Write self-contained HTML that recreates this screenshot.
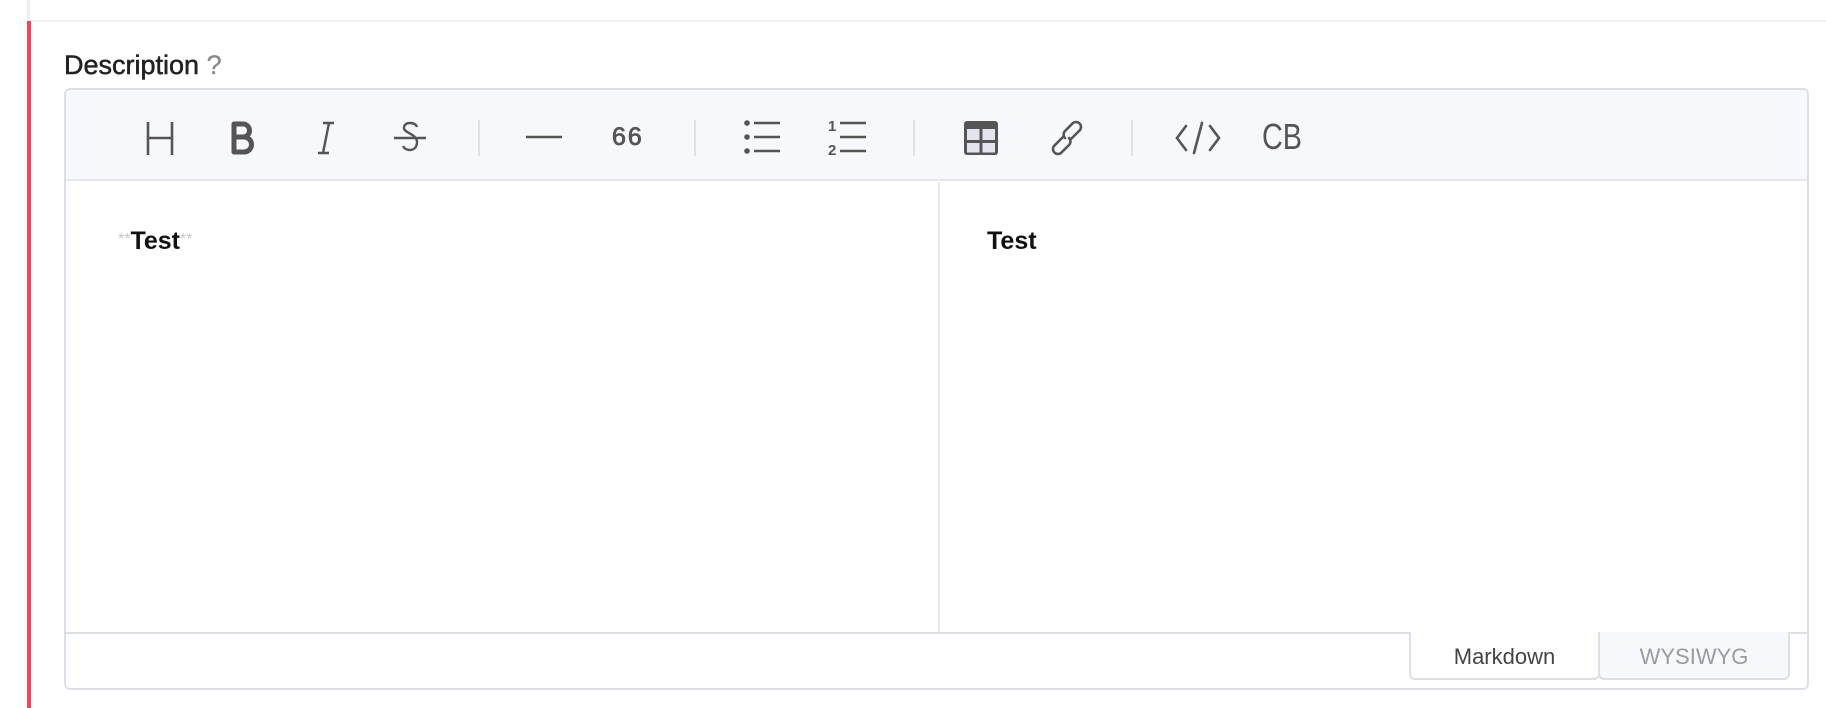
<!DOCTYPE html>
<html><head><meta charset="utf-8"><style>
*{margin:0;padding:0;box-sizing:border-box}
body{width:1826px;height:708px;background:#fff;position:relative;overflow:hidden;font-family:"Liberation Sans",Arial,sans-serif}
.a{position:absolute}
.ic{position:absolute;top:121px;width:32px;height:32px}
.sep{position:absolute;top:120px;width:2px;height:36px;background:#e0e1e5}
</style></head><body>
<div class="a" style="left:27px;top:0;width:3px;height:21px;background:#eeeeee"></div>
<div class="a" style="left:30px;top:20px;width:1796px;height:2px;background:#f2f2f4"></div>
<div class="a" style="left:27px;top:21px;width:4px;height:687px;background:#f0485a"></div>
<div class="a" style="left:64px;top:49px;font-size:27px;color:#222;line-height:32px;-webkit-text-stroke:0.5px #222">Description <span style="color:#8a8a8a;-webkit-text-stroke:0.3px #8a8a8a">?</span></div>

<div class="a" style="left:64px;top:88px;width:1745px;height:602px;border:2px solid #dcdfe6;border-radius:6px;background:#fff"></div>
<div class="a" style="left:66px;top:90px;width:1741px;height:91px;background:#f7f8fb;border-bottom:2px solid #e6e7eb;border-radius:5px 5px 0 0"></div>

<!-- H -->
<svg class="ic" style="left:144px;top:120px;height:36px" viewBox="0 0 32 36"><path d="M4 2v33M28 2v33M4 18h24" stroke="#555" stroke-width="2.6" fill="none"/></svg>
<!-- B -->
<svg class="ic" style="left:226px;top:120px;height:36px" viewBox="0 0 32 36"><path d="M8 4h9a6.5 6.5 0 0 1 0 13H8zM8 17h10a7 7 0 0 1 0 15H8z" stroke="#555" stroke-width="5" fill="none" stroke-linejoin="round"/></svg>
<!-- I -->
<svg class="ic" style="left:310px;top:120px;height:36px" viewBox="0 0 32 36"><path d="M13 3h11M8 33h11M19 3l-6 30" stroke="#555" stroke-width="2.4" fill="none"/></svg>
<!-- S -->
<svg class="ic" style="left:392px;top:120px;height:36px;width:36px" viewBox="0 0 36 36"><path d="M25 7c-1-3-4-4-7-4-4 0-6 2-6 5 0 5 13 6 13 14 0 5-3 8-7 8s-6-2-7-4M2 18h32" stroke="#555" stroke-width="2.4" fill="none"/></svg>
<div class="sep" style="left:478px"></div>
<!-- hr -->
<svg class="ic" style="left:526px;width:36px" viewBox="0 0 36 32"><path d="M0 16h36" stroke="#555" stroke-width="2.6"/></svg>
<div class="a" style="left:612px;top:122px;font-size:25px;color:#555;line-height:30px;letter-spacing:2px;-webkit-text-stroke:0.8px #555">66</div>
<div class="sep" style="left:694px"></div>
<!-- ul -->
<svg class="ic" style="left:744px;width:38px;top:118px;height:38px" viewBox="0 0 38 38"><circle cx="3" cy="5" r="2.8" fill="#555"/><circle cx="3" cy="19" r="2.8" fill="#555"/><circle cx="3" cy="33" r="2.8" fill="#555"/><path d="M10 5h26M10 19h26M10 33h26" stroke="#555" stroke-width="2.6"/></svg>
<!-- ol -->
<svg class="ic" style="left:828px;width:40px;top:118px;height:38px" viewBox="0 0 40 38"><text x="0" y="13" font-size="15" font-weight="bold" fill="#555" font-family="Liberation Sans">1</text><text x="0" y="37" font-size="15" font-weight="bold" fill="#555" font-family="Liberation Sans">2</text><path d="M12 5h26M12 19h26M12 33h26" stroke="#555" stroke-width="2.6"/></svg>
<div class="sep" style="left:913px"></div>
<!-- table -->
<svg class="ic" style="left:963px;width:36px;top:120px;height:36px" viewBox="0 0 36 36"><rect x="1" y="1" width="34" height="34" rx="3" fill="#555"/><rect x="4" y="9" width="12.5" height="11" fill="#e3e4ef"/><rect x="19.5" y="9" width="12.5" height="11" fill="#e3e4ef"/><rect x="4" y="23" width="12.5" height="9.5" fill="#e3e4ef"/><rect x="19.5" y="23" width="12.5" height="9.5" fill="#e3e4ef"/></svg>
<!-- link -->
<svg class="ic" style="left:1049px;width:36px;top:120px;height:36px" viewBox="0 0 36 36"><g stroke="#555" stroke-width="2.6" fill="none" stroke-linecap="round"><path d="M14 17l-9 9a5 5 0 0 0 7 7l8-8a5 5 0 0 0 0-7"/><path d="M22 19l9-9a5 5 0 0 0-7-7l-8 8a5 5 0 0 0 0 7"/></g></svg>
<div class="sep" style="left:1131px"></div>
<!-- code -->
<svg class="ic" style="left:1175px;width:46px;top:120px;height:36px" viewBox="0 0 46 36"><path d="M11 6L2 18l9 12M35 6l9 12-9 12M27 3l-8 30" stroke="#555" stroke-width="2.6" fill="none" stroke-linecap="round"/></svg>
<div class="a" style="left:1262px;top:119px;font-size:36px;color:#555;line-height:36px;transform:scaleX(0.8);transform-origin:left">CB</div>

<div class="a" style="left:938px;top:183px;width:2px;height:449px;background:#e8e8ec"></div>
<div class="a" style="left:118px;top:226px;font-size:25px;line-height:28px;color:#111"><span style="color:#c8c8c8;font-size:16px;vertical-align:5px">**</span><b>Test</b><span style="color:#c8c8c8;font-size:16px;vertical-align:5px">**</span></div>
<div class="a" style="left:987px;top:227px;font-size:25px;line-height:28px;color:#111;font-weight:bold">Test</div>

<div class="a" style="left:66px;top:632px;width:1741px;height:2px;background:#dcdfe6"></div>
<div class="a" style="left:1409px;top:632px;width:191px;height:48px;background:#fff;border:2px solid #dcdfe6;border-top:none;border-radius:0 0 6px 6px;text-align:center;font-size:22px;color:#444;line-height:50px">Markdown</div>
<div class="a" style="left:1598px;top:632px;width:192px;height:48px;background:#f7f8fb;border:2px solid #dcdfe6;border-top:none;border-radius:0 0 6px 6px;text-align:center;font-size:22px;color:#9a9aa2;line-height:50px">WYSIWYG</div>
</body></html>
